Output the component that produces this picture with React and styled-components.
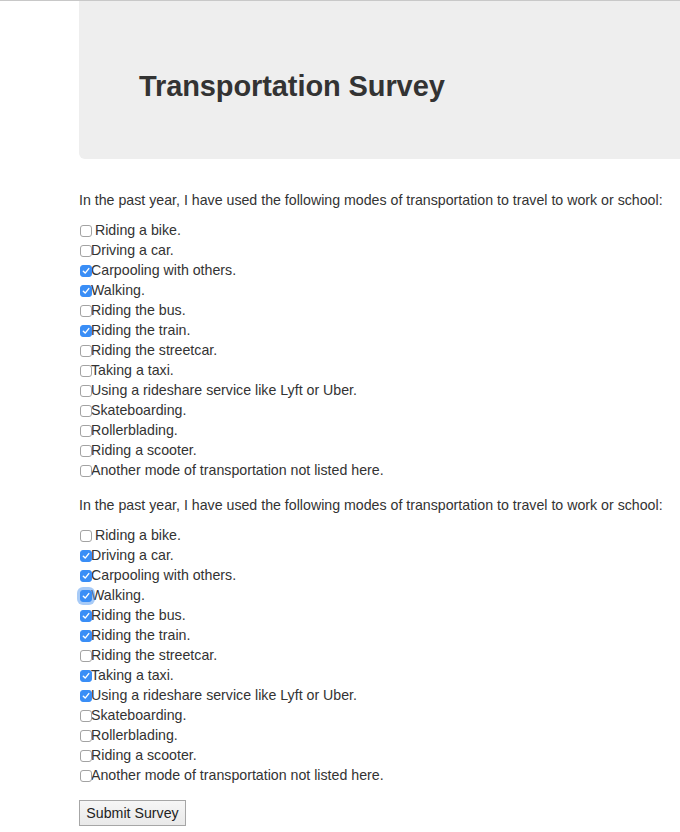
import React, { useState } from "react";
import styled, { createGlobalStyle } from "styled-components";

const MODES = [
  " Riding a bike.",
  "Driving a car.",
  "Carpooling with others.",
  "Walking.",
  "Riding the bus.",
  "Riding the train.",
  "Riding the streetcar.",
  "Taking a taxi.",
  "Using a rideshare service like Lyft or Uber.",
  "Skateboarding.",
  "Rollerblading.",
  "Riding a scooter.",
  "Another mode of transportation not listed here.",
];

const QUESTION =
  "In the past year, I have used the following modes of transportation to travel to work or school:";

const GlobalStyle = createGlobalStyle`
  html, body {
    margin: 0;
    padding: 0;
    overflow: hidden;
    background: #fff;
  }
  body {
    border-top: 1px solid #c8c8c8;
    font-family: "Liberation Sans", Arial, Helvetica, sans-serif;
    font-size: 14.2px;
    line-height: 20px;
    color: #333;
  }
`;

const Page = styled.div`
  margin-left: 79px;
`;

const Jumbotron = styled.header`
  background: #eeeeee;
  border-radius: 0 0 0 6px;
  height: 158px;
  padding: 0 60px;
  display: flex;
  align-items: center;
  margin-bottom: 31px;
`;

const Title = styled.h1`
  margin: 0;
  font-size: 29px;
  font-weight: 700;
  letter-spacing: -0.1px;
  color: #333;
  transform: translateY(6px);
`;

const Question = styled.p`
  margin: 0 0 10px;
`;

const List = styled.div`
  display: flex;
  flex-direction: column;
  margin-bottom: 15px;
`;

const Row = styled.label`
  display: flex;
  align-items: center;
  height: 20px;
  white-space: pre;
  cursor: pointer;
`;

const Box = styled.span`
  flex: none;
  width: 12px;
  height: 12px;
  margin-left: 1px;
  box-sizing: border-box;
  border-radius: 3px;
  display: inline-flex;
  align-items: center;
  justify-content: center;
  border: 1px solid ${(p) => (p.$checked ? "#3a8ef6" : "#a3a3a3")};
  background: ${(p) => (p.$checked ? "#3a8ef6" : "#fff")};
  box-shadow: ${(p) =>
    p.$focused ? "0 0 0 3px rgba(96, 160, 240, 0.55)" : "none"};
  transform: translateY(1px);
`;

const Text = styled.span`
  margin-left: -1px;
`;

const SubmitButton = styled.button`
  font-family: "Liberation Sans", Arial, Helvetica, sans-serif;
  font-size: 14.2px;
  color: #222;
  height: 26px;
  width: 107px;
  padding: 0;
  border: 1px solid #a6a6a6;
  border-radius: 0;
  background: linear-gradient(#f6f6f6, #e9e9e9);
  cursor: pointer;
`;

const Check = () => (
  <svg width="8" height="8" viewBox="0 0 8 8" aria-hidden>
    <path
      d="M1.3 4.3 L3.2 6.1 L6.8 1.6"
      fill="none"
      stroke="#fff"
      strokeWidth="1.4"
      strokeLinecap="round"
      strokeLinejoin="round"
    />
  </svg>
);

const Survey = ({ initial, focusIndex }) => {
  const [checked, setChecked] = useState(initial);
  const toggle = (i) =>
    setChecked((c) => c.map((v, j) => (j === i ? !v : v)));

  return (
    <>
      <Question>{QUESTION}</Question>
      <List>
        {MODES.map((m, i) => (
          <Row key={m} onClick={() => toggle(i)}>
            <Box $checked={checked[i]} $focused={focusIndex === i}>
              {checked[i] && <Check />}
            </Box>
            <Text>{m}</Text>
          </Row>
        ))}
      </List>
    </>
  );
};

export default function App() {
  const first = [false, false, true, true, false, true, false, false, false, false, false, false, false];
  const second = [false, true, true, true, true, true, false, true, true, false, false, false, false];
  return (
    <>
      <GlobalStyle />
      <Page>
        <Jumbotron>
          <Title>Transportation Survey</Title>
        </Jumbotron>
        <Survey initial={first} />
        <Survey initial={second} focusIndex={3} />
        <SubmitButton type="button">Submit Survey</SubmitButton>
      </Page>
    </>
  );
}
